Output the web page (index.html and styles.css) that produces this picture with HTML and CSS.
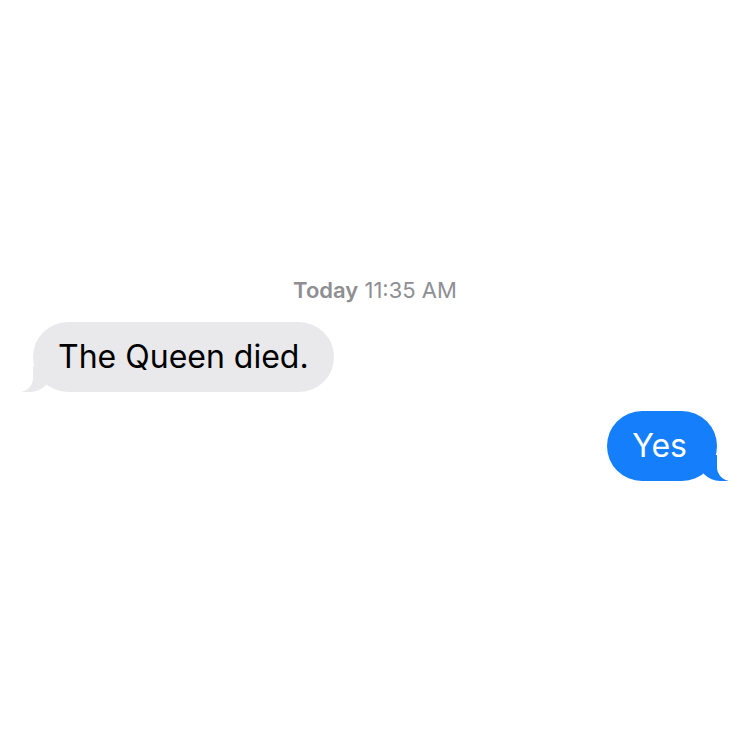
FILE: index.html
```html
<!DOCTYPE html>
<html>
<head>
<meta charset="utf-8">
<link rel="stylesheet" href="styles.css">
</head>
<body>
<main class="thread">
  <div class="stamp"><b>Today</b> 11:35 AM</div>
  <div class="row row-in"><div class="bubble in">The Queen died.</div></div>
  <div class="row row-out"><div class="bubble out">Yes</div></div>
</main>
</body>
</html>
```
FILE: styles.css
```css
html, body {
  margin: 0;
  padding: 0;
  background: #ffffff;
}
.thread {
  width: 750px;
  height: 750px;
  box-sizing: border-box;
  padding: 277px 22px 0 22px;
  display: flex;
  flex-direction: column;
  font-family: Inter, "Liberation Sans", Arial, sans-serif;
}
.stamp {
  text-align: center;
  color: #8e8e93;
  font-size: 22px;
  line-height: 26px;
  margin-bottom: 19px;
}
.stamp b {
  font-weight: 600;
}
.row {
  display: flex;
}
.row-in {
  justify-content: flex-start;
  padding-left: 11px;
}
.row-out {
  justify-content: flex-end;
  padding-right: 11px;
  margin-top: 19px;
}
.bubble {
  position: relative;
  font-size: 32px;
  line-height: 38px;
  padding: 16px 25px;
  border-radius: 35px;
}
.in {
  background: #e9e9eb;
  color: #000;
}
.out {
  background: #147efb;
  color: #fff;
  padding-right: 30px;
}
.bubble::before,
.bubble::after {
  content: "";
  position: absolute;
  bottom: 0;
  height: 26px;
}
.in::before {
  left: -11px;
  width: 30px;
  background: #e9e9eb;
  border-bottom-right-radius: 22px;
}
.in::after {
  left: -24px;
  width: 24px;
  background: #ffffff;
  border-bottom-right-radius: 14px;
}
.out::before {
  right: -11px;
  width: 30px;
  background: #147efb;
  border-bottom-left-radius: 22px;
}
.out::after {
  right: -24px;
  width: 24px;
  background: #ffffff;
  border-bottom-left-radius: 14px;
}
```
